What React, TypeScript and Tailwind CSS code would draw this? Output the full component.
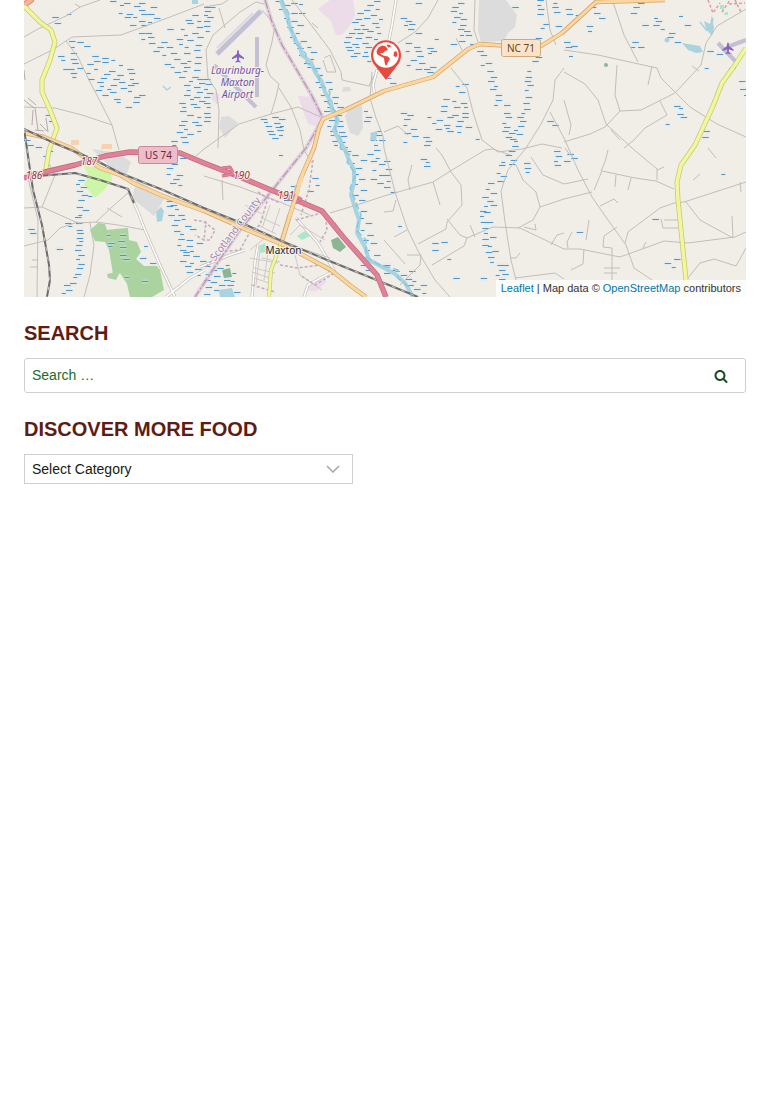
import { useState } from "react";

type Tile = { x: number; y: number; marks: string };

// Marsh symbols: "x,y" pairs in thirds of a map pixel, relative to the tile origin.
const marshTiles: Tile[] = [
  {
    x: 24,
    y: 0,
    marks:
      "258,2 300,8 345,8 288,16 330,18 380,20 345,30 284,40 308,42 352,42 372,42 328,52 302,52 390,54 345,62 372,66 318,76 352,76 85,52 130,43 92,70 505,45 485,60 520,62 430,88 490,70 518,80 470,88 505,98 345,100 365,100 480,104 520,112 372,112 458,118 352,118 490,120 375,130 412,127 465,132 515,134 400,142 428,142 482,142 510,150 388,154 440,160 415,166 480,160 515,170 450,178 490,182 422,192 470,188 512,190 440,202 480,202 510,210 452,216 478,212 465,230 505,230 520,238 495,242 525,248 480,256 510,262 488,270 518,275 480,284 510,292 498,298 525,304 466,310 500,312 475,322 510,320 468,334 490,345 520,350 472,362 505,365 465,376 480,386 515,376 458,396 490,402 520,392 470,410 442,424 475,426 445,434 135,122 160,127 180,138 140,142 102,168 140,160 205,168 112,180 140,178 210,184 235,175 262,180 145,190 190,192 235,187 285,196 118,208 132,208 160,205 210,208 255,212 310,208 140,218 188,220 240,222 280,224 315,220 145,232 192,236 230,234 268,238 318,236 220,246 285,246 325,248 228,258 260,256 312,256 215,270 250,266 290,264 235,286 258,276 312,274 270,298 330,292 345,284 278,306 328,306 305,322 65,346 75,362 0,420 10,434 35,442",
  },
  {
    x: 204,
    y: 0,
    marks:
      "0,20 15,22 2,32 0,44 10,50 0,62 0,78 5,92 215,2 240,14 262,10 285,12 225,26 262,38 285,38 240,55 262,62 280,75 250,82 275,98 258,112 290,122 270,130 310,142 280,145 320,155 285,164 318,178 300,190 330,204 310,200 345,225 335,245 365,245 345,262 375,268 350,286 385,290 360,302 390,308 370,322 400,322 360,332 375,346 395,346 375,360 398,362 370,378 400,378 378,392 405,396 380,406 410,408 385,422 405,426 390,436 412,440 510,4 490,14 515,28 480,30 460,40 500,44 525,56 455,58 480,54 445,66 470,74 505,68 450,88 475,86 515,82 435,100 460,98 490,94 520,100 425,110 455,114 485,110 510,116 420,126 445,132 475,128 455,142 485,140 430,150 450,158 480,155 425,140 440,168 475,168 490,184 170,358 205,352 225,357 180,366 210,370 185,378 215,382 228,378 190,392 220,390 195,402 225,404 205,414 0,236 5,252 0,268 8,278 0,292 0,308 8,322 0,338 2,350 0,364 480,332 485,350 480,362 500,400 520,392 515,406 500,420 525,420 510,434",
  },
  {
    x: 384,
    y: 0,
    marks:
      "95,10 50,54 65,64 60,74 75,72 72,88 95,98 152,118 65,130 90,142 130,145 65,154 95,154 140,152 100,168 132,160 80,180 105,190 138,200 68,196 95,206 120,208 130,216 10,235 18,248 222,8 205,20 225,38 200,32 210,50 230,58 205,66 228,76 222,88 240,92 228,104 245,106 200,132 225,122 258,132 280,153 290,165 305,190 290,196 310,214 320,230 312,242 330,258 335,284 318,268 335,300 330,316 360,314 385,20 460,0 460,14 462,28 460,42 478,72 470,84 455,115 455,172 445,184 430,212 425,230 422,244 430,255 422,270 425,290 418,308 420,328 412,338 400,352 408,364 402,378 390,390 398,402 375,400 378,416 390,422 385,438 360,340 365,352 355,368 360,380 355,394 365,412 508,10 505,22 510,36 515,78 215,258 235,252 225,276 178,297 205,304 230,308 172,318 210,320 240,322 170,332 205,344 235,340 130,352 158,360 190,350 235,352 145,370 180,374 220,364 155,386 185,384 215,378 245,382 190,394 220,396 50,340 70,346 60,358 58,374 80,386 62,398 85,408 58,427 118,412 125,424 120,434 275,416 490,364 505,376",
  },
  {
    x: 564,
    y: 0,
    marks:
      "5,28 8,42 35,44 85,22 90,38 105,54 68,78 72,92 0,126 5,142 22,138 15,168 222,10 208,22 200,40 270,54 275,62 235,75 268,75 290,88 315,100 310,112 332,127 345,48 362,76 205,127 222,142 202,140 430,152 458,162 495,205 422,205 525,244 528,268 540,286 345,325 340,343 330,317 350,352 305,373 418,394 415,410",
  },
  {
    x: 20,
    y: 148,
    marks:
      "80,10 70,25 175,95 168,108 182,118 170,130 185,142 205,145 175,155 170,178 188,185 175,200 165,208 135,224 168,226 145,234 170,246 172,256 170,270 178,280 168,292 165,306 175,322 168,332 175,348 170,360 165,378 160,388 150,404 132,412 138,426 125,436 110,302 30,256 25,242 260,262 300,262 265,284 295,280 265,295 300,296 300,320 310,334 315,388 365,400 390,346 360,330 372,295 440,60 455,48 480,30 440,78 470,80 460,92 450,105 475,112 440,158 452,170 440,174 465,182 445,200 475,202 462,215 485,212 455,230 495,235 462,248 480,258 510,242 475,272 500,275 472,290 500,295 530,285 480,306 510,310 490,322 520,325 480,338 510,345 495,355 525,362 500,372 530,380 490,312 540,340",
  },
  {
    x: 204,
    y: 148,
    marks:
      "0,355 20,366 40,360 65,352 5,378 30,384 60,395 85,375 0,396 20,402 45,410 80,398 5,416 30,425 70,410 60,435 90,432 0,438 410,2 430,10 445,22 510,6 490,18 515,30 500,40 525,48 470,35 505,65 525,80 500,92 520,105 440,45 455,60 445,78 465,92 450,108 470,125 445,140 465,155 450,175 470,190 460,210 485,225 470,245 490,260 475,275 500,285 485,305 510,320 495,338 520,350 225,20 240,155 260,115 325,90 335,110 310,130 470,350 485,365",
  },
  {
    x: 384,
    y: 148,
    marks:
      "0,40 5,62 0,80 8,100 0,118 20,132 110,32 125,43 120,55 365,22 375,8 352,42 380,35 345,52 375,48 338,76 350,84 312,106 340,100 305,124 320,134 295,148 310,160 300,174 320,172 288,188 300,192 288,205 308,222 290,222 295,240 300,256 318,268 295,274 295,290 312,295 305,312 325,310 312,328 318,342 340,352 355,352 345,366 335,380 355,378 345,394 290,390 42,235 145,286 172,283 145,305 190,334 208,391 510,10 515,25 510,40 512,52 420,45 422,60 425,72 0,352 15,365 0,375 35,368 75,368 50,380 65,392 85,400 70,412 110,412 90,424 115,435",
  },
  {
    x: 564,
    y: 148,
    marks: "10,18 22,31 0,40 472,79 265,214 38,253 302,346 323,357 330,334",
  },
];

const marshPath = marshTiles
  .map((t) =>
    t.marks
      .split(" ")
      .map((pair, i) => {
        const [mx, my] = pair.split(",").map(Number);
        return `M${(t.x + mx / 3).toFixed(1)} ${Math.round(t.y + my / 3) + 0.5}h${i % 4 === 3 ? 4 : 6.5}`;
      })
      .join("")
  )
  .join("");

const minorRoads = [
  "M24 37L38 29L68 15L80 7L100 0M24 64L54 49L72 37L121 35L170 17L204 4",
  "M66 41L78 57L90 82L105 111L112 125L119 150M75 4L80 7",
  "M24 107L55 108L82 115L112 125",
  "M204 7L222 4L228 0M219 8L225 28M262 10L275 25L272 42L266 65L270 76L279 84L276 97L271 114L239 124L204 149L196 156M271 114L298 107L323 118",
  "M206 50L213 35L240 12L256 2L264 4M206 50L208 78L216 90L219 110L218 148",
  "M279 88L291 107L300 130L304 150L312 163M292 0L306 18L330 50L341 72L342 80M323 60L327 72L336 72L330 55L324 58M312 23L318 28",
  "M342 80L369 86M372 72L370 98L376 118L383 136L384 148L395 192L407 228L419 253L435 280L450 297M369 86L378 68",
  "M438 0L428 18L415 32L398 43M475 0L474 30L478 42M546 0L550 30L556 45M456 38L462 50",
  "M451 68L467 88L473 112L482 140L498 152L522 149L542 144L562 148",
  "M564 68L555 80L553 100L541 124L526 148L508 170L501 191L505 222L511 260L516 280",
  "M550 112L564 138L578 170L592 197L608 220L626 245L634 268L652 280",
  "M384 196L433 182L452 170L485 150L493 149L510 155M384 132L398 126L408 135",
  "M433 182L440 205M412 165L408 180L410 190M436 148L442 155L451 172L461 185L462 205L447 222L446 229L418 244",
  "M467 238L493 227L520 228L564 249M447 219L460 235L467 238L464 246L432 265M470 225L475 237M394 237L407 230",
  "M516 165L523 180L536 192L540 207L533 220L518 228M540 207L564 199M531 157L543 175L564 184",
  "M407 255L421 255L420 265M420 265L400 285M515 278L555 273L564 279",
  "M564 50L598 55L657 68L661 78L690 107L717 124L746 137M613 2L624 35L638 62",
  "M675 93L641 110L620 111L605 127L590 134L564 142M675 93L701 65L706 43L717 26L746 9",
  "M617 65L615 95L620 111M652 66L648 85M692 66L699 71",
  "M564 72L585 84L598 100L606 124L632 148L657 169L657 180M660 101L667 115L645 128L634 140L624 148",
  "M602 171L635 178L656 181L674 189M602 171L594 190M616 175L615 187M631 178L628 190M657 170L664 167",
  "M608 150L605 162L601 171M564 184L588 179M564 199L592 192M600 206L614 199L618 203",
  "M564 249L580 249L620 257L645 248L664 241L688 243L735 237L746 232M625 243L628 232L660 208L674 203L684 202L746 182",
  "M686 202L700 220L733 238M733 237L732 216M740 182L741 192M661 219L663 228L678 228M664 220L678 220",
  "M688 278L700 263L714 259L736 266L746 248M646 242L643 248M603 247L612 248L612 280M603 247L604 236L617 227",
  "M584 249L583 264L571 270M572 232L567 242L568 248M589 220L586 240M604 268L620 268M604 273L617 273",
  "M24 208L42 207L78 223L96 222L118 225L145 230M42 207L55 175L49 164M28 178L38 220L37 297M24 246L48 240L60 228L78 222",
  "M90 223L94 245L90 275L84 297M96 222L112 207L129 192M107 208L122 217M32 260L38 260M30 267L38 267",
  "M222 180L223 200M204 176L240 187L280 202L310 215M330 213L360 204L384 196M384 240L405 264",
  "M570 155L565 148M693 180L700 174M611 130L620 140M564 100L571 125L569 135M725 50L732 54M708 148L716 158",
  "M551 245L557 235L564 233M520 253L516 258L510 258M535 224L536 230L524 227M384 212L393 211L396 200",
];

const lightRoads = [
  "M129 192L138 212L145 230L160 265L175 297M166 297L190 278L205 270",
  "M396 0L392 25L389 40M377 70L373 85L375 97",
  "M296 218L318 243L335 272M304 297L308 285L335 270M258 244L255 262L252 297M200 267L230 255L245 250",
];

const trunkRoads = [
  "M24 133L44 137L71 148L100 168L120 175L133 183L163 196L204 211L247 230L284 245L331 270L351 286L366 297",
  "M282 241L293 205L300 180L314 148L319 128L323 119L345 110L384 91L433 77L468 49L480 44L510 46L541 46L562 33L596 2L665 0",
];

const railway =
  "M24 129L54 143L95 160L120 173L163 190L204 208L244 224L284 242L332 262L384 283L418 297M24 129L33 190L42 225L49 265L50 280L47 297M38 176L75 173L100 180L128 189L134 203";

const townStreets =
  "M258 225L276 234M262 218L280 226M270 205L262 228M280 208L272 232M288 214L280 240M250 258L278 263M254 268L275 273M260 250L256 285M268 253L264 280M254 278L272 284M265 238L250 250M245 205L262 214M290 235L300 225L325 240M300 248L330 258M295 255L300 275L322 290M335 222L345 240M262 258L280 262M252 272L270 278";

const hamletStreets =
  "M24 100L34 108M28 98L36 105M35 108L38 130M40 124L47 131M46 118L48 132M35 130L44 131M33 110L32 125M24 70L25 80";

const boundaryPath = "M265 0L272 22L282 45L298 72L312 96L323 118L306 148L262 203L240 230L216 265L195 297";

const airplanePath =
  "M0 -7C1 -7 1.2 -5 1.2 -2.5L7 2V3.7L1.2 1.5L1 5L3 6.7V7.7L0 7L-3 7.7V6.7L-1 5L-1.2 1.5L-7 3.7V2L-1.2 -2.5C-1.2 -5 -1 -7 0 -7Z";

function MapDrawing() {
  return (
    <svg
      className="block h-full w-full bg-[#f1eee8]"
      viewBox="24 0 722 297"
      preserveAspectRatio="xMidYMin slice"
      role="img"
      aria-label="Map of Maxton"
      fill="none"
      strokeLinejoin="round"
    >
      {/* land cover */}
      <g fill="#dcdcdc">
        <path d="M479 0H506L517 15L515 27L508 33L504 41L481 42L478 30Z" />
        <path d="M349 109L362 105L363 128L358 136L350 133L345 116Z" />
        <path d="M92 149L118 153L131 162L126 176L112 169Z" />
        <path d="M137 178L164 199L154 216L132 198Z" />
        <path d="M221 117L229 116L238 123L225 138L219 128ZM343 87L350 87L351 91L342 92Z" />
      </g>
      <g fill="#ecdbe9">
        <path d="M318 9L330 0H353L355 15L351 24L342 35H336L331 21Z" />
        <path d="M298 96L315 97L323 117L318 127L308 124Z" />
        <path d="M308 285L318 277L327 281L317 291L309 291Z" />
        <path d="M212 92L220 94L218 105L212 100Z" />
      </g>
      <path fill="#cdf7a6" d="M84 166L110 169L112 180L104 190L95 198L84 185L88 175Z" />
      <g fill="#abd3a0">
        <path d="M90 230L98 223L105 224L107 230L115 229L128 228L129 240L137 242L141 252L136 259L144 266L157 266L160 270L164 290L152 297H130L127 284L120 273L113 274L109 250L105 242L95 241Z" />
        <path d="M107 274L116 272L124 264L127 268L119 274L116 280L108 278Z" />
      </g>
      <g fill="#8bb593">
        <path d="M331 240L338 237L346 247L340 252L333 248ZM222 270L230 268L232 277L224 278Z" />
        <circle cx="606" cy="65" r="2" />
      </g>
      <g fill="#a9e7cb">
        <path d="M297 236L305 231L310 236L302 240ZM259 246L265 243L267 252L260 253ZM720 5H724V9H720ZM725 12H728V15H724Z" />
      </g>
      <g fill="#f5d3ae">
        <path d="M71 140H79V145H71ZM102 144H112V149H101Z" />
      </g>

      {/* wetlands and water */}
      <path d={marshPath} stroke="#cfe8f4" strokeWidth="4" opacity=".42" />
      <path d={marshPath} stroke="#5096c8" strokeWidth="1" />
      <path
        d="M281 0L284 9L288 18L290 28L295 39L300 47L302 55L311 62L315 72L322 82L325 92L331 102L332 110L338 120L334 130L339 140L345 150L349 160L354 170L354 182L351 195L355 208L359 220L357 233L365 247L369 260L384 268L395 274L405 283L413 297"
        stroke="#aad3df"
        strokeWidth="4"
      />
      <path
        d="M282 0L290 16L287 22L295 36L294 42L306 54L306 62L318 72L320 84L330 92L328 103L337 113L335 128L342 141L340 148L350 155L347 162L356 175L350 188L355 200L361 215L356 230L366 240L366 257L380 265L398 270L398 278L410 288"
        stroke="#80cbe8"
        strokeWidth="1.5"
        strokeDasharray="7 3"
      />
      <g fill="#aad3df">
        <path d="M682 43L700 46L703 52L696 53L688 50Z" />
        <path d="M704 21L710 24L712 15L714 28L712 36L706 29Z" />
        <path d="M156 212L161 207L164 211L162 221L157 222Z" />
        <path d="M295 185L300 186L299 194L294 192ZM219 290L232 288L235 297H220ZM371 133L377 131L376 141L370 140ZM192 0H198V4H192Z" />
        <circle cx="667" cy="40" r="2.5" />
      </g>
      <path d="M163 86L167 90L171 87M700 22L707 31M713 18L711 32" stroke="#aad3df" strokeWidth="1.5" />

      {/* airfields */}
      <g stroke="#c3c0d3">
        <path d="M217 54L261 11" strokeWidth="5" />
        <path d="M257 37V97" strokeWidth="4" />
        <path d="M214 65L256 107" strokeWidth="4" />
        <path d="M718 43L737 63M727 47L746 40" strokeWidth="4" />
      </g>
      <path d="M217 48L253 13" stroke="#dad8e2" strokeWidth="2" />

      {/* roads */}
      <g stroke="#c2bdb8" strokeWidth="1">
        {minorRoads.map((d) => (
          <path key={d} d={d} />
        ))}
      </g>
      {lightRoads.map((d) => (
        <g key={d}>
          <path d={d} stroke="#c4beba" strokeWidth="3" />
          <path d={d} stroke="#fff" strokeWidth="1.6" />
        </g>
      ))}
      <path d={townStreets} stroke="#cfc9c5" strokeWidth="1" />
      <path d={hamletStreets} stroke="#b5a9b0" strokeWidth="1" />
      <g stroke="#c6aabc" strokeWidth="1.5" strokeDasharray="3 2">
        <path d="M258 192L268 198L260 225L250 232L240 250L220 252L205 268M296 220L325 212L327 230L320 242M262 195L280 203M313 160L309 190L301 215M280 265L298 268L320 265L333 274L315 285L300 275M204 222L215 230L210 240L204 240M252 285L275 292" />
        <path d="M708 0L713 13L720 3M722 12L730 0M735 0L741 12M729 4L745 3" stroke="#db9ba7" />
        <path d="M194 220L206 222L204 240L195 235" />
      </g>
      <path d={boundaryPath} stroke="#d7c5d5" strokeWidth="4" opacity=".7" />
      <path d={boundaryPath} stroke="#b891ae" strokeWidth="1.2" strokeDasharray="9 2 2 2" />

      <g strokeLinecap="round">
        <path d="M24 5L31 0" stroke="#dc8a6c" strokeWidth="6" />
        <path d="M24 5L31 0" stroke="#f7b29c" strokeWidth="4" />
      </g>
      {[
        "M24 6L40 22L51 30L55 42L50 60L42 80L42 92L50 110L57 128L49 150L45 175",
        "M746 48L735 65L722 83L713 106L695 145L681 165L677 182L678 200L682 240L686 280V297",
        "M282 241L277 254L271 270L269 297",
      ].map((d, i) => (
        <g key={d}>
          <path d={d} stroke="#c5ca7b" strokeWidth={i === 2 ? 4 : 5} />
          <path d={d} stroke="#f3f79c" strokeWidth={i === 2 ? 2.6 : 3.4} />
        </g>
      ))}

      {trunkRoads.map((d) => (
        <g key={d}>
          <path d={d} stroke="#d8a265" strokeWidth="4.4" />
          <path d={d} stroke="#fad7a0" strokeWidth="3" />
        </g>
      ))}

      {/* railways */}
      <path d={railway} stroke="#6b6b6b" strokeWidth="2" />
      <path d={railway} stroke="#c9c9c9" strokeWidth="1" strokeDasharray="4 6" />

      {[
        "M24 178L45 172L75 165L105 156L130 152L180 153L204 163L240 177L271 190L296 200L322 211L344 238L377 275L386 297",
        "M222 168L230 167L234 174L222 176M294 195L301 199L295 203",
      ].map((d, i) => (
        <g key={d}>
          <path d={d} stroke="#cb6a84" strokeWidth={i ? 3 : 5.4} />
          <path d={d} stroke="#dd8297" strokeWidth={i ? 2 : 3.8} />
        </g>
      ))}
      <path d="M289 218L297 194L303 173L311 155" stroke="#fad7a0" strokeWidth="3" />

      {/* road shields */}
      <rect x="138.500" y="146.500" width="39" height="17" rx="2" fill="#edbdc8" stroke="#c9899a" />
      <rect x="501.500" y="39.500" width="39" height="17" rx="2" fill="#fae3c6" stroke="#d3a878" />

      {/* map labels */}
      <g
        fontFamily="'Noto Sans', 'Open Sans', sans-serif"
        textAnchor="middle"
        stroke="#f5f2ec"
        strokeWidth="2"
        paintOrder="stroke"
      >
        <g fontSize="10" fontStyle="italic" fill="#7352a8">
          <text x="237.500" y="74">Laurinburg-</text>
          <text x="237.500" y="86">Maxton</text>
          <text x="237.500" y="98">Airport</text>
        </g>
        <g fontSize="10" fontStyle="italic" fill="#993344">
          <text x="34" y="179">186</text>
          <text x="89" y="165">187</text>
          <text x="241.500" y="179">190</text>
          <text x="286" y="199">191</text>
        </g>
        <text x="283.500" y="254" fontSize="10" fill="#222">
          Maxton
        </text>
        <text fontSize="10" fill="#a283b5" transform="translate(238 231) rotate(-53)">
          Scotland County
        </text>
        <g fontSize="10" stroke="none">
          <text x="158.500" y="159" fill="#6d2b3d">US 74</text>
          <text x="521" y="52" fill="#664424">NC 71</text>
        </g>
      </g>
      <g fill="#8461c4">
        <path d={airplanePath} transform="translate(238 56) scale(.86)" />
        <path d={airplanePath} transform="translate(728 48) scale(.8)" />
      </g>

      {/* location pin */}
      <path d="M386 80L374.500 65A15 15 0 1 1 397.500 65Z" fill="#e8493f" />
      <circle cx="386" cy="55" r="12.800" fill="#fff" />
      <path
        fill="#e8493f"
        d="M376.500 51L378.500 47.500L382 45.500L385 46L387 48L388 50L385 51L383 53L380 53L382 55L385 56L388 56.500L390 59L388 62L387 65L385.500 65.500L384.500 62L384 58L380 56L377 54ZM394 52L396.500 51L397.500 55L396 57.500L393.500 55.500Z"
      />
      <path d="M386.500 44.500L390 45L391 47L388 47.500Z" fill="#e8493f" />
    </svg>
  );
}

function SearchIcon() {
  return (
    <svg className="size-3.5" viewBox="0 0 26 28" fill="currentColor" aria-hidden="true">
      <path d="M18 13c0-3.859-3.141-7-7-7s-7 3.141-7 7 3.141 7 7 7 7-3.141 7-7zM26 26c0 1.094-0.906 2-2 2-0.531 0-1.047-0.219-1.406-0.594l-5.359-5.344c-1.828 1.266-4.016 1.937-6.234 1.937-6.078 0-11-4.922-11-11s4.922-11 11-11 11 4.922 11 11c0 2.219-0.672 4.406-1.937 6.234l5.359 5.359c0.359 0.359 0.578 0.875 0.578 1.406z" />
    </svg>
  );
}

export default function App() {
  const [query, setQuery] = useState("");

  return (
    <main className="flex flex-col gap-6 bg-white px-6 font-['Liberation_Sans',Arial,sans-serif] text-sm text-[#14210f]">
      <section className="relative h-[297px] overflow-hidden" aria-label="Map">
        <MapDrawing />
        <p className="absolute right-0 bottom-0 bg-white/80 px-[5px] text-[11px] leading-[17px] text-[#333]">
          <a className="text-[#0078a8]" href="https://leafletjs.com">Leaflet</a>
          {" | Map data © "}
          <a className="text-[#0078a8]" href="https://www.openstreetmap.org">OpenStreetMap</a>
          {" contributors"}
        </p>
      </section>

      <section className="flex flex-col gap-3">
        <h2 className="text-xl leading-[25px] font-bold text-[#5e1c12] uppercase">
          <label htmlFor="site-search">Search</label>
        </h2>
        <form
          role="search"
          className="flex h-[35px] rounded-[3px] border border-[#cfcfcf]"
          onSubmit={(e) => e.preventDefault()}
        >
          <input
            id="site-search"
            type="search"
            placeholder="Search …"
            value={query}
            onChange={(e) => setQuery(e.target.value)}
            className="min-w-0 flex-1 bg-transparent px-[7px] pb-px placeholder:text-[#216b2a]"
          />
          <button type="submit" aria-label="Search" className="flex w-12 items-center justify-center text-[#1d4d24]">
            <SearchIcon />
          </button>
        </form>
      </section>

      <section className="flex flex-col gap-3">
        <h2 className="text-xl leading-[25px] font-bold text-[#5e1c12] uppercase">
          <label htmlFor="category">Discover more food</label>
        </h2>
        <div className="grid w-full max-w-[329px] items-center">
          <select
            id="category"
            className="col-start-1 row-start-1 h-[30px] w-full appearance-none border border-[#cfcfcf] bg-white px-[7px] text-sm"
          >
            <option>Select Category</option>
          </select>
          <svg
            className="pointer-events-none col-start-1 row-start-1 mr-3 h-2 w-4 justify-self-end"
            viewBox="0 0 16 8"
            fill="none"
            stroke="#aaa"
            strokeWidth="1.6"
            aria-hidden="true"
          >
            <path d="M2 1L8 7L14 1" />
          </svg>
        </div>
      </section>
    </main>
  );
}
